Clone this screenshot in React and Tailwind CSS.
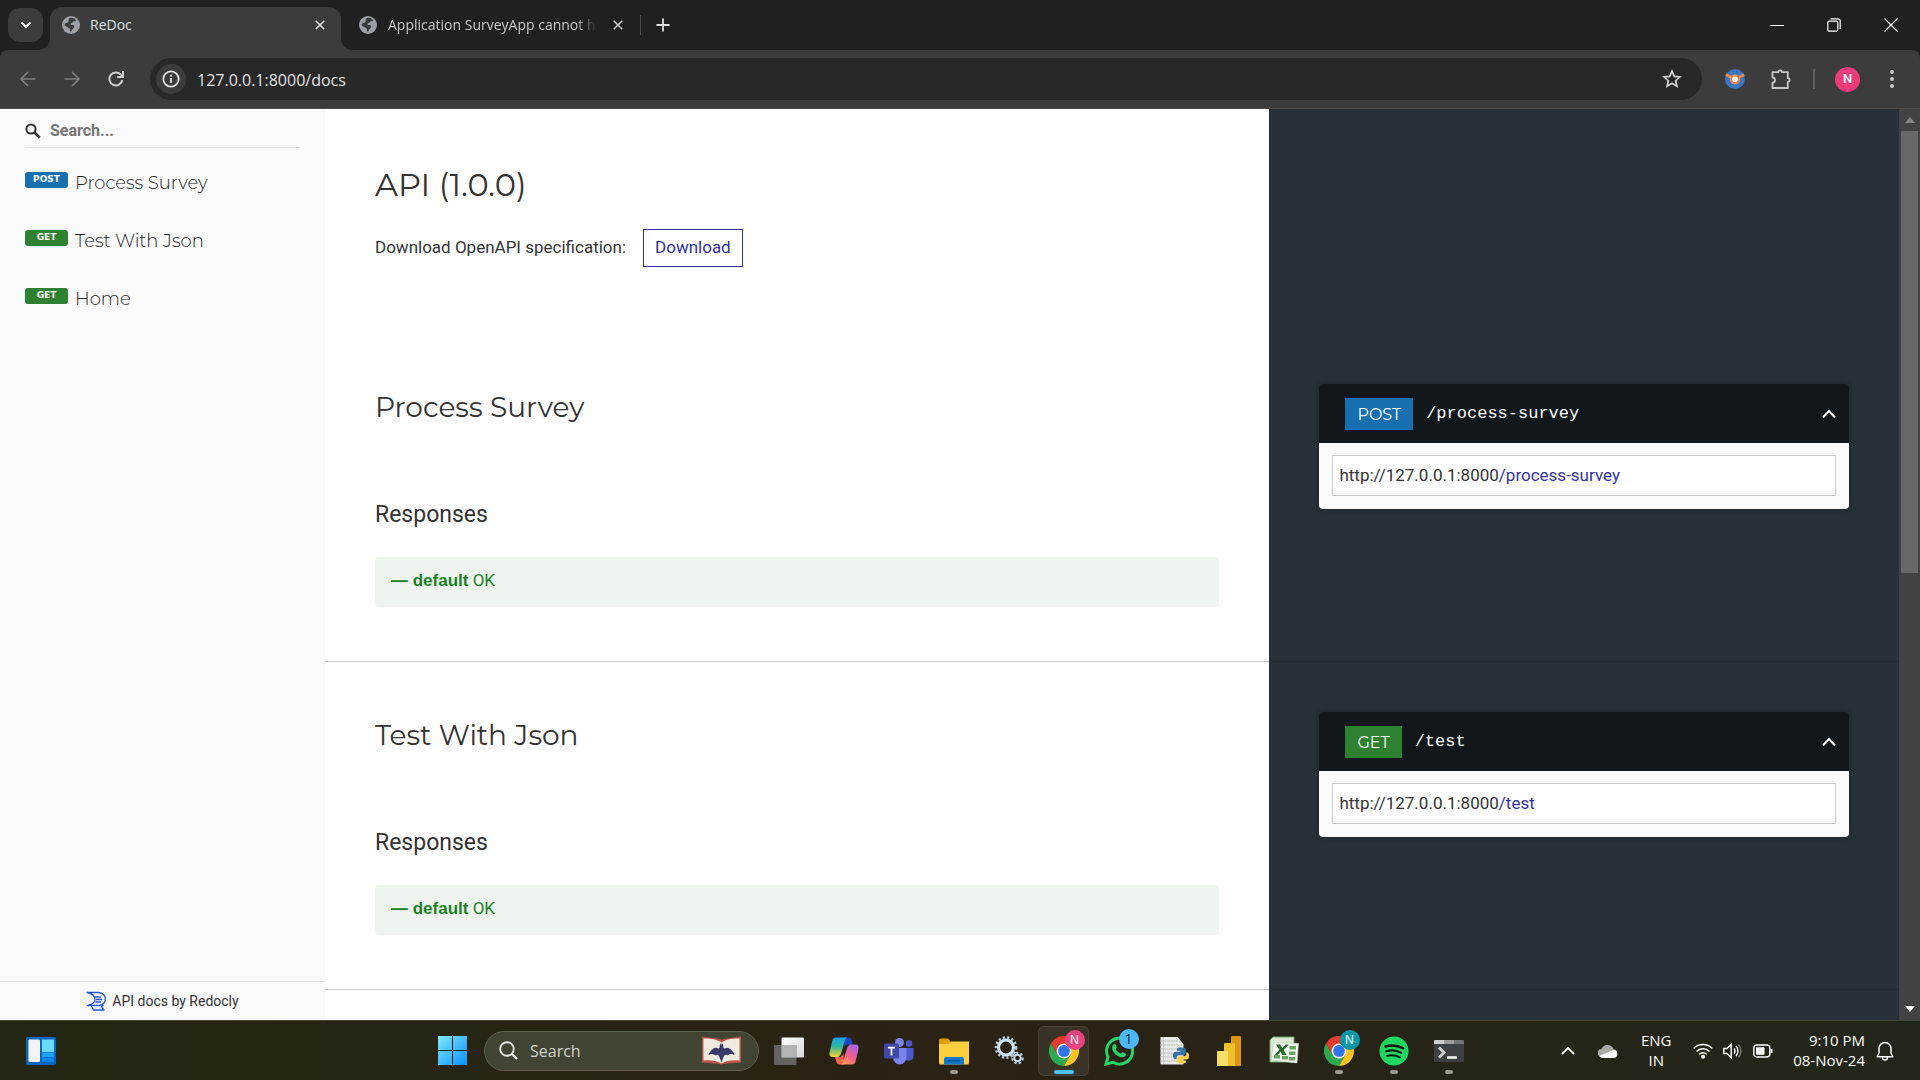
import React from "react";

const ui = "font-['Open_Sans','Noto_Sans',sans-serif]";
const heading = "font-['Montserrat','Inter',sans-serif]";

function Globe() {
  return (
    <svg viewBox="0 0 18 18" className="size-[18px] shrink-0">
      <circle cx="9" cy="9" r="9" fill="#9aa0a6" />
      <path d="M7.500 2.200c3-1.200 6 .4 6.800 3-1 .3-1.600-.5-2.500-.2-.8.3-.6 1.500-1.600 1.800C8.800 7.200 8 7.600 8.800 8.800c1 .6 2.700-.2 3.300 1 .6 1.300-.6 2.500-1.600 3.200-.5 1.200-.9 2.200-2 2.600-1-.7-.3-2.200-1-3.100C6.500 11.200 4 11 2.600 9c.2-1.500 1-2.300 2.200-2.300 1.400.2 2-.6 1.800-1.900-.2-1.100.1-2 .9-2.600z" fill="#3a3b3c" />
    </svg>
  );
}

function X({ className = "size-[10px]" }) {
  return (
    <svg viewBox="0 0 10 10" className={className} fill="none" stroke="currentColor" strokeWidth="1.6">
      <path d="M.7.7l8.600 8.600M9.300.7L.7 9.300" />
    </svg>
  );
}

function Tabs() {
  return (
    <div className="flex h-[50px] shrink-0 items-stretch text-[#dfe1e3]">
      <button aria-label="Search tabs" className="ml-2 mt-2 flex h-[34px] w-[35px] items-center justify-center rounded-xl bg-[#3c3c3c]">
        <svg viewBox="0 0 12 12" className="size-3" fill="none" stroke="#fff" strokeWidth="2"><path d="M1.500 3.500L6 8l4.500-4.500" /></svg>
      </button>
      <div className="relative ml-[7px] mt-[7px] flex w-[291px] items-center rounded-t-xl bg-[#3c3c3c] pb-[7px] pl-3 pr-4 text-sm">
        <svg viewBox="0 0 12 12" className="absolute -left-3 bottom-0 size-3" fill="#3c3c3c"><path d="M12 0v12H0C7 12 12 7 12 0z" /></svg>
        <svg viewBox="0 0 12 12" className="absolute -right-3 bottom-0 size-3" fill="#3c3c3c"><path d="M0 0v12h12C5 12 0 7 0 0z" /></svg>
        <Globe />
        <span className="ml-2.5 flex-1">ReDoc</span>
        <button aria-label="Close ReDoc"><X /></button>
      </div>
      <div className="mt-[7px] flex w-[291px] items-center pb-[7px] pl-[18px] pr-2 text-sm text-[#c6c8ca]">
        <Globe />
        <span className="ml-[11px] w-[209px] whitespace-nowrap [mask-image:linear-gradient(to_right,black_90%,transparent)]">Application SurveyApp cannot h</span>
        <button aria-label="Close Application SurveyApp" className="ml-4"><X /></button>
      </div>
      <div className="mt-[7px] flex items-center pb-[7px]">
        <span className="ml-2 h-5 w-px bg-[#4a4c4d]" />
        <button aria-label="New tab" className="ml-[15px]">
          <svg viewBox="0 0 14 14" className="size-[14px]" stroke="#dfe1e3" strokeWidth="1.800"><path d="M7 .5v13M.5 7h13" /></svg>
        </button>
      </div>
      <div className="ml-auto flex items-center gap-[43px] pr-[22px] text-white">
        <button aria-label="Minimize" className="flex size-[14px] items-center"><span className="h-px w-full bg-white" /></button>
        <button aria-label="Restore">
          <svg viewBox="0 0 14 14" className="size-[14px]" fill="none" stroke="#fff" strokeWidth="1.200"><rect x=".8" y="3.200" width="10" height="10" rx="1.500" /><path d="M3.500.8H11a2.200 2.200 0 012.200 2.200v8" /></svg>
        </button>
        <button aria-label="Close window">
          <svg viewBox="0 0 14 14" className="size-[14px]" stroke="#fff" strokeWidth="1.200"><path d="M.5.5l13 13M13.500.5l-13 13" /></svg>
        </button>
      </div>
    </div>
  );
}

function Toolbar() {
  return (
    <div className="flex h-[59px] shrink-0 items-center rounded-t-lg border-b border-[#4b4b4b] bg-[#3c3c3c] pl-5 text-[#c7c7c7]">
      <div className="flex w-[130px] items-center gap-7">
        <button aria-label="Back"><svg viewBox="0 0 16 16" className="size-4" fill="none" stroke="#7d7d7d" strokeWidth="1.700"><path d="M15.500 8H1.500M8 1L1 8l7 7" /></svg></button>
        <button aria-label="Forward"><svg viewBox="0 0 16 16" className="size-4" fill="none" stroke="#7d7d7d" strokeWidth="1.700"><path d="M.5 8h14M8 1l7 7-7 7" /></svg></button>
        <button aria-label="Reload"><svg viewBox="0 0 16 16" className="size-4" fill="none" stroke="#d0d0d0" strokeWidth="2"><path d="M14.300 9A6.500 6.500 0 1112.600 3.400L14.500 5.300" /><path d="M15 0v6H9.200" /></svg></button>
      </div>
      <div className="flex h-[42px] flex-1 items-center rounded-full bg-[#282828] pl-1.5 pr-5">
        <button aria-label="View site information" className="flex size-[30px] items-center justify-center rounded-full bg-[#3c3c3c]">
          <svg viewBox="0 0 18 18" className="size-[18px]" fill="none" stroke="#e3e3e3" strokeWidth="1.800"><circle cx="9" cy="9" r="7.700" /><path d="M9 8v5M9 4.800v1.800" /></svg>
        </button>
        <input aria-label="Address" defaultValue="127.0.0.1:8000/docs" className="ml-[11px] flex-1 bg-transparent pt-0.5 text-base text-[#e3e3e3] outline-none" />
        <button aria-label="Bookmark this tab">
          <svg viewBox="0 0 20 20" className="size-5" fill="none" stroke="#d0d0d0" strokeWidth="1.700"><path d="M10 2.200l2.300 5.200 5.700.5-4.300 3.800 1.300 5.600-5-3-5 3 1.300-5.600L2 7.900l5.700-.5z" /></svg>
        </button>
      </div>
      <div className="ml-[23px] flex items-center">
        <button aria-label="Survey extension">
          <svg viewBox="0 0 20 20" className="size-5"><circle cx="10" cy="10" r="10" fill="#3a76c4" /><path d="M1 5.500L7 9M19 5.500L13 9" stroke="#f08a4b" strokeWidth="3" /><circle cx="10" cy="10.500" r="5" fill="#f08a4b" /><circle cx="10" cy="10.300" r="2.800" fill="#fff" /></svg>
        </button>
        <button aria-label="Extensions" className="ml-[26px]">
          <svg viewBox="0 0 20 20" className="size-5" fill="none" stroke="#c7c7c7" strokeWidth="1.800" strokeLinejoin="round"><path d="M1.500 3.200H7.300a1.800 1.800 0 013.600 0H16.800V9.200a1.800 1.800 0 010 3.600V19H1.500V13.600a2.500 2.500 0 000-5z" /></svg>
        </button>
        <span className="ml-[22px] h-5 w-0.5 bg-[#5c5c5c]" />
        <button aria-label="Profile N" className="ml-5 flex size-[25px] items-center justify-center rounded-full bg-[#ec3d7a] font-['Roboto',sans-serif] text-[13px] font-medium text-white">N</button>
        <button aria-label="Menu" className="ml-[30px] mr-[26px] flex flex-col gap-[3px]">
          <span className="size-1 rounded-full bg-[#c7c7c7]" /><span className="size-1 rounded-full bg-[#c7c7c7]" /><span className="size-1 rounded-full bg-[#c7c7c7]" />
        </button>
      </div>
    </div>
  );
}

function NavItem({ method, color, children }) {
  return (
    <li>
      <a href="#op" className="flex h-[58px] items-start">
        <span className={`${color} flex h-4 w-[43px] items-center justify-center rounded-[3px] font-['DejaVu_Sans',sans-serif] text-[9px] font-bold text-white`}>{method}</span>
        <span className={`${heading} ml-[7px] text-lg font-light leading-[22px] text-[#222]`}>{children}</span>
      </a>
    </li>
  );
}

function Sidebar() {
  return (
    <aside className="flex w-[325px] shrink-0 flex-col bg-[#fafafa]">
      <label className="mx-[25px] mt-1.5 flex h-[33px] items-center border-b border-[#e1e1e1]">
        <svg viewBox="0 0 16 16" className="size-4" fill="none" stroke="#333"><circle cx="6" cy="6" r="4.600" strokeWidth="2" /><path d="M9.500 9.500l5.200 5.200" strokeWidth="2.600" /></svg>
        <input aria-label="Search" placeholder="Search..." className="ml-[9px] min-w-0 flex-1 bg-transparent text-base font-bold outline-none placeholder:text-[#757575]" />
      </label>
      <ul className="ml-[25px] mt-6 flex-1">
        <NavItem method="POST" color="bg-[#186faf]">Process Survey</NavItem>
        <NavItem method="GET" color="bg-[#2f8132]">Test With Json</NavItem>
        <NavItem method="GET" color="bg-[#2f8132]">Home</NavItem>
      </ul>
      <a href="#redocly" className="flex h-[39px] items-center justify-center gap-1.5 border-t border-[#e1e1e1] text-sm text-[#333]">
        <svg viewBox="0 0 20 20" className="size-5" fill="none" stroke="#2457e0" strokeWidth="1.300" strokeLinejoin="round"><path d="M1 1.500h11.500c9 1 9 11.500.5 13H1.500c6-1.500 7.500-3 7.500-6S6 2.500 1 1.500zM2 14.500l4-1M5 14.500l2.500 4.500h10.500l-2.500-3.300 2-2M9 6h6M10 8.500h6M9.500 11h5.500" /></svg>
        API docs by Redocly
      </a>
    </aside>
  );
}

function Operation({ title, method, color, path }) {
  return (
    <section className="flex">
      <div className="w-3/5 border-b border-[#c8c8c8] px-[50px] pb-[54px] pt-[50px]">
        <h2 className={`${heading} text-[28px] leading-[46px] text-[#333]`}>{title}</h2>
        <h3 className="mt-[69px] text-[23px] leading-8">Responses</h3>
        <button className="mt-[26px] block h-[50px] w-full rounded-sm bg-[#eef5ee] px-4 pb-0.5 text-left text-[17px] text-[#1d8127]">
          <strong className="font-['Liberation_Sans',sans-serif]">— default</strong> OK
        </button>
      </div>
      <div className="w-2/5 border-b border-[#212c31] bg-[#263238] px-[50px] pt-[50px]">
        <div className="rounded shadow-[0_0_6px_rgba(0,0,0,0.33)]">
          <button className="flex h-[59px] w-full items-center rounded-t bg-[#11171a] pl-[26px] pr-[13px] text-white">
            <span className={`${color} ${heading} flex h-8 items-center px-3 pt-0.5 text-base`}>{method}</span>
            <span className="ml-[13px] font-['Liberation_Mono',monospace] text-[17px]">{path}</span>
            <svg viewBox="0 0 14 10" className="ml-auto h-2.5 w-3.5" fill="none" stroke="#fff" strokeWidth="2"><path d="M1 8.500l6-6.500 6 6.500" /></svg>
          </button>
          <div className="rounded-b bg-[#fafafa] px-[13px] pb-[13px] pt-3">
            <div className="flex h-[41px] items-center border border-[#ccc] bg-white px-1.5 text-[17px]">http://127.0.0.1:8000<span className="text-[#32329f]">{path}</span></div>
          </div>
        </div>
      </div>
    </section>
  );
}

function ChromeIcon({ letter, badge }) {
  return (
    <span className="relative">
      <svg viewBox="0 0 30 30" className="size-[30px]">
        <path d="M2 7.500L8.500 18.750 15 22.500 21.500 18.750 15 30A15 15 0 012 7.500z" fill="#2da94f" />
        <path d="M28 7.500A15 15 0 0115 30L21.500 18.750 15 7.500z" fill="#fcc31e" />
        <path d="M2 7.500A15 15 0 0128 7.500H15L8.500 18.750z" fill="#e33b2e" />
        <circle cx="15" cy="15" r="7.400" fill="#fff" /><circle cx="15" cy="15" r="5.900" fill="#2f74ea" />
      </svg>
      <span className={`${badge} absolute -right-1.5 -top-1.5 flex size-5 items-center justify-center rounded-full text-xs font-semibold text-white/80`}>{letter}</span>
    </span>
  );
}

function Gear({ cx, cy, r, w }) {
  return (
    <g fill="none" stroke="#cfe4f3">
      <circle cx={cx} cy={cy} r={r} strokeWidth={w} />
      <circle cx={cx} cy={cy} r={r + w / 2 + 1} strokeWidth="2.500" strokeDasharray="2.200 2.200" stroke="#b4cfe4" />
    </g>
  );
}

const apps = [
  ["Task View", <svg viewBox="0 0 30 30" className="size-[30px]"><defs><linearGradient id="tv" x2="1" y2="1"><stop stopColor="#fff" /><stop offset="1" stopColor="#d8d8d8" /></linearGradient></defs><rect x="7.500" y="1.500" width="22.500" height="20" rx="1" fill="url(#tv)" /><rect x="0" y="9" width="22.500" height="20" rx="1" fill="#6f6f6f" fillOpacity=".85" /><rect x="7.500" y="9" width="15" height="12.500" fill="#b4b4b4" /></svg>],
  ["Copilot", <svg viewBox="0 0 30 30" className="size-[30px]"><defs><linearGradient id="cpa" x2="0" y2="1"><stop stopColor="#18a0f0" /><stop offset=".45" stopColor="#2fb5a0" /><stop offset="1" stopColor="#f4d12c" /></linearGradient><linearGradient id="cpb" x1=".8" x2=".2" y2="1"><stop stopColor="#a665f0" /><stop offset=".5" stopColor="#ee5a94" /><stop offset="1" stopColor="#fb9a4b" /></linearGradient></defs><path d="M15 1.500h4.500c2 0 2.700 1.200 3.300 3.500l1 3.500h-5c-2 0-3 1-3.500 3z" fill="#1b48c8" /><path d="M6.500 1.500H19c-2 0-2.800 2-3.500 4.500l-3.300 11c-.8 2.700-2 4-4.500 4H3.500C0 21 0 18 1 14.500L3 6c.7-3 1.500-4.500 3.500-4.500z" fill="url(#cpa)" /><path d="M15 28.500h-4.500c-2 0-2.800-1.200-3.400-3.500L6 21h4c2.500 0 3.700-1.200 4.500-4z" fill="#f4654b" /><path d="M23.500 28.500H11c2 0 2.800-2 3.500-4.500l3.300-11c.8-2.700 2-4.500 4.500-4.500h4.200c3.500 0 3.500 3 2.500 6.500l-2 8.500c-.7 3-1.500 5-3.500 5z" fill="url(#cpb)" /></svg>],
  ["Teams", <svg viewBox="0 0 30 30" className="size-[30px]"><circle cx="15.500" cy="6.500" r="4.500" fill="#7b83eb" /><circle cx="25" cy="7.500" r="3.200" fill="#5059c9" /><path d="M20 12h9.500v8a5 5 0 01-9.500 2z" fill="#5059c9" /><path d="M9 12h13.500v9a6.750 7.500 0 01-13.500 0z" fill="#7b83eb" /><rect x="0" y="7.500" width="15" height="15" rx="1.500" fill="#4048a8" /><path d="M4 11.700h7M7.500 12v7.500" stroke="#fff" strokeWidth="1.800" /></svg>],
  ["File Explorer", <svg viewBox="0 0 30 30" className="size-[30px]"><path d="M0 4.500a2 2 0 012-2h7l3 3.500h8v5H0z" fill="#dfa006" /><path d="M0 8h9.500l3-2.500H30V27a1.500 1.500 0 01-1.500 1.500h-27A1.500 1.500 0 010 27z" fill="#fdcf3f" /><path d="M5 28.500V23a2 2 0 012-2h16a2 2 0 012 2v5.500z" fill="#1177c9" /><path d="M8.500 24.800h13" stroke="#07508f" strokeWidth="1.300" /></svg>, "dot"],
  ["Settings", <svg viewBox="0 0 30 30" className="size-[30px]"><Gear cx={12} cy={11.5} r={7.5} w={3.2} /><Gear cx={23.5} cy={22} r={3.2} w={1.8} /></svg>],
  ["Chrome", <ChromeIcon letter="N" badge="bg-[#e8437f]" />, "active"],
  ["WhatsApp", <span className="relative"><svg viewBox="0 0 30 30" className="size-[30px]" fill="none"><path d="M2 28l2-7A13 13 0 119 26.300z" stroke="#25d366" strokeWidth="3" /><path d="M9.500 8.500c1-1 2-.7 2.500.4l.8 2c.3.9-1.300 1.700-1 2.400 1 2 2.600 3.500 4.700 4.300.8.300 1.500-1.600 2.500-1.200l2.300 1.100c.9.500.8 1.200.2 2.200-1.200 1.800-3.500 2-5.700 1.200-3.300-1.200-5.800-3.500-7.200-6.700-.8-2-.8-4.200.9-5.700z" fill="#25d366" /></svg><span className="absolute -right-[5px] -top-[7px] flex size-5 items-center justify-center rounded-full bg-[#4cb8f5] text-sm text-[#12222c]">1</span></span>],
  ["Python IDLE", <svg viewBox="0 0 30 30" className="size-[30px]"><path d="M1.500 1h17l6 7v20.500h-23z" fill="#e9e9e7" /><path d="M4.500 1v27M1.500 5h18M1.500 9h22M1.500 13h22M1.500 17h20M1.500 21h15M1.500 25h18" stroke="#b9b9b6" strokeWidth="1" strokeDasharray="2 .6" /><path d="M21 11.500h3c2 0 2.800 1 2.800 2.700v2.600c0 1.700-1 2.400-2.600 2.400h-4c-1.700 0-2.500 1-2.500 2.600v1.500h-1.200c-1.700 0-2.500-1.500-2.500-3.800s.8-3.800 2.800-3.800h4.700v-1h-3.500v-1.500c0-1.200 1.200-1.700 3-1.700z" fill="#3974a8" /><path d="M24 27.500h-3c-2 0-2.800-1-2.800-2.700v-2.100c0-1.700 1-2.500 2.600-2.500h4c1.700 0 2.500-1 2.500-2.600v-1.100h.7c1.400 0 2 1.500 2 3.500s-.7 3.600-2.500 3.600h-4v1h3.500v1.200c0 1.200-1.200 1.700-3 1.700z" fill="#fbd047" /></svg>],
  ["Power BI", <svg viewBox="0 0 30 30" className="size-[30px]"><rect x="17" width="10" height="30" rx=".8" fill="#dc9511" /><path d="M10 8a1 1 0 011-1h9a1 1 0 011 1v22H10z" fill="#f0c02d" /><path d="M3 16a1 1 0 011-1h9a1 1 0 011 1v14H3z" fill="#f8de6a" /></svg>],
  ["Excel", <svg viewBox="0 0 30 30" className="size-[30px]"><path d="M4 1h21v25H1V4z" fill="#d9ecd2" stroke="#6aa36a" /><path d="M5 6.500l24.500 1-1.500 19.500L2 24z" fill="#f7faf4" stroke="#b8cdb4" strokeWidth=".6" /><path d="M20.500 10h6.500v3.500h-6.500zM20 15.500h6.500V19H20zM13 20h6v3.500h-6zM20 21h6v3.500h-6zM5 19h6v3.500H5z" fill="#69a65b" /><path d="M7 8.500h4.200l2 3.500 3.500-3.500h3l-5 5.500 3 5h-4.200l-1.800-3-3 3H5.500l5-5.300z" fill="#256b2c" /></svg>],
  ["Chrome profile N", <ChromeIcon letter="N" badge="bg-[#0797a7]" />, "dot"],
  ["Spotify", <svg viewBox="0 0 30 30" className="size-[30px]" fill="none" stroke="#10180f" strokeLinecap="round"><circle cx="15" cy="15" r="14.500" fill="#1ed760" stroke="none" /><path d="M6.500 10.500c6-1.700 12-1.200 17.500 1.700" strokeWidth="2.600" /><path d="M7.300 15.300c5-1.400 10.500-.9 15 1.600" strokeWidth="2.200" /><path d="M8 19.800c4.500-1.100 9-.6 12.800 1.500" strokeWidth="1.900" /></svg>, "dot"],
  ["Terminal", <svg viewBox="0 0 30 30" className="size-[30px]"><rect y="4" width="30" height="22" rx="1" fill="#3e4043" /><path d="M0 5a1 1 0 011-1h9v4H0z" fill="#cfcfd1" /><path d="M10 4h10v4H10z" fill="#9b9b9d" /><path d="M20 4h9a1 1 0 011 1v3H20z" fill="#747577" /><path d="M5 11.500l5 5-5 5" fill="none" stroke="#cfcfcf" strokeWidth="2.800" /><path d="M13 21.500h10" stroke="#f2f2f2" strokeWidth="2.600" /></svg>, "dot"],
];

function Taskbar() {
  return (
    <footer className="grid h-[60px] shrink-0 grid-cols-[1fr_auto_1fr] items-center border-t border-[#44473a] bg-linear-to-r from-[#232614] via-[#2a2214] to-[#22261a] text-white">
      <button aria-label="Widgets" className="ml-[26px] justify-self-start">
        <svg viewBox="0 0 30 28" className="h-7 w-[30px]"><rect width="30" height="28" rx="1.500" fill="#0a66b8" /><rect x="2.500" y="2.500" width="11.500" height="22.500" rx="1" fill="#f4f4f6" /><path d="M16 2.500h12V15H16z" fill="#68d8ff" /><path d="M16 15.500h12v4.500H16z" fill="#1ea2fb" /><path d="M16 20.500h12V25H16z" fill="#0583ee" /></svg>
      </button>
      <div className="flex items-center pr-1.5">
        <button aria-label="Start" className="mr-[17px]">
          <svg viewBox="0 0 29 29" className="size-[29px]"><defs><linearGradient id="win" gradientUnits="userSpaceOnUse" x1="0" y1="0" x2="29" y2="29"><stop stopColor="#7deaff" /><stop offset="1" stopColor="#0a90fb" /></linearGradient></defs><path d="M0 0h14v14H0zM15 0h14v14H15zM0 15h14v14H0zM15 15h14v14H15z" fill="url(#win)" /></svg>
        </button>
        <label className="mr-0.5 flex h-10 w-[275px] items-center rounded-full border border-[#5d604e] bg-[#414433] pl-3.5 pr-[17px]">
          <svg viewBox="0 0 19 19" className="size-[19px]" fill="none" stroke="#e3e4df"><circle cx="8" cy="8" r="6.800" strokeWidth="1.900" /><path d="M13 13l5 5" strokeWidth="2.400" /></svg>
          <input aria-label="Windows search" placeholder="Search" className="ml-3 min-w-0 flex-1 bg-transparent text-base outline-none placeholder:text-[#d0d1cb]" />
          <svg viewBox="0 0 39 29" className="h-[29px] w-[39px]"><path d="M0 .5L18 3l2 1 1-1L39 .5v26L21 28l-1.500 1L18 28 0 26.500z" fill="#b8544a" /><path d="M1.500 2.500C8 2 15 3 19.500 6.500 24 3 31 2 37.500 2.500v22c-7-.5-13 0-18 3-5-3-11-3.500-18-3z" fill="#f0ebdf" /><path d="M19.500 7v20" stroke="#c5bfae" strokeWidth="2" /><path d="M18 7.500l1 1h1l1-1 .5 4.500c2 1.500 3-1 5 0 3 1.500 5 4 6 7-2.500-1.500-5-1.500-6.500.5-1.500-1-3-1-4 .5L19.500 26 17 20c-1-1.500-2.500-1.500-4-.5-1.500-2-4-2-6.500-.5 1-3 3-5.500 6-7 2-1 3 1.500 5 0z" fill="#38386a" /></svg>
        </label>
        {apps.map(([name, icon, state]) => (
          <button key={name} aria-label={name} className={`relative mx-[2px] flex h-[50px] w-[51px] items-center justify-center rounded-md ${state === "active" ? "bg-white/8 ring-1 ring-inset ring-white/8" : ""}`}>
            {icon}
            {state === "dot" && <span className="absolute bottom-0.5 h-1 w-2 rounded-full bg-[#9b988f]" />}
            {state === "active" && <span className="absolute bottom-0.5 h-1 w-5 rounded-full bg-[#4cc2ff]" />}
          </button>
        ))}
      </div>
      <div className="flex items-center justify-self-end text-[15px] leading-5">
        <button aria-label="Show hidden icons"><svg viewBox="0 0 14 10" className="h-2.5 w-3.5" fill="none" stroke="#fff" strokeWidth="1.800"><path d="M1 8l6-6 6 6" /></svg></button>
        <svg viewBox="0 0 20 14" className="ml-[23px] h-3.5 w-5"><path d="M4 13a4 4 0 01-.5-8A6.500 6.500 0 0115.500 5a4.300 4.300 0 010 8.500z" fill="#a9a9a5" /><path d="M1.500 12L15 6a4 4 0 01.500 8H4c-1 0-2-.7-2.500-2z" fill="#fff" /></svg>
        <div className="ml-[22px] w-8 pb-0.5 text-center">ENG<br />IN</div>
        <svg viewBox="0 0 20 16" className="ml-[21px] h-4 w-5" fill="none" stroke="#fff" strokeWidth="1.500"><path d="M.7 5.500a13 13 0 0118.600 0M3.500 8.500a9 9 0 0113 0M6.300 11.300a5.200 5.200 0 017.400 0" /><circle cx="10" cy="13.800" r="1.300" fill="#fff" /></svg>
        <svg viewBox="0 0 20 16" className="ml-2.5 h-4 w-5" fill="none" stroke="#fff" strokeWidth="1.400"><path d="M.8 5.500h3L8.200 1.500v13L3.800 10.500h-3zM11 5.500a4 4 0 010 5M13 3a7.500 7.500 0 010 10" /><path d="M15.500 1.500a10 10 0 010 13" stroke="#777a70" /></svg>
        <svg viewBox="0 0 20 14" className="ml-2.5 h-3.5 w-5" fill="none" stroke="#fff" strokeWidth="1.400"><rect x=".8" y="1" width="16" height="12" rx="3" /><rect x="3" y="3.300" width="8.500" height="7.500" rx="1" fill="#fff" stroke="none" /><path d="M18.500 5v4" strokeWidth="2" /></svg>
        <div className="ml-5 pb-0.5 text-right">9:10 PM<br />08-Nov-24</div>
        <button aria-label="Notifications" className="ml-[11px] mr-[26px]"><svg viewBox="0 0 18 20" className="h-5 w-[18px]" fill="none" stroke="#fff" strokeWidth="1.500" strokeLinejoin="round"><path d="M3 12V7.500a6 6 0 0112 0V12l1.800 3.800H1.200zM6.500 16.500a2.500 2.500 0 005 0" /></svg></button>
      </div>
    </footer>
  );
}

export default function App() {
  return (
    <div className={`flex h-screen flex-col overflow-hidden bg-[#1f2121] ${ui}`}>
      <Tabs />
      <Toolbar />
      <div className="flex min-h-0 flex-1 overflow-hidden bg-white font-['Roboto',sans-serif] text-[#333]">
        <Sidebar />
        <main className="flex min-w-0 flex-1 flex-col overflow-hidden">
          <section className="flex shrink-0">
            <div className="h-[225px] w-3/5 px-[50px] pt-[52px]">
              <h1 className={`${heading} text-[32px] leading-[48px]`}>API (1.0.0)</h1>
              <p className="mt-5 flex items-center text-[17px]">Download OpenAPI specification:
                <a href="#download" className="ml-[17px] flex h-[38px] items-center border border-[#32329f] px-[11px] text-[#32329f]">Download</a>
              </p>
            </div>
            <div className="w-2/5 bg-[#263238]" />
          </section>
          <Operation title="Process Survey" method="POST" color="bg-[#186faf]" path="/process-survey" />
          <Operation title="Test With Json" method="GET" color="bg-[#2f8132]" path="/test" />
          <div className="flex flex-1">
            <div className="w-3/5" />
            <div className="w-2/5 bg-[#263238]" />
          </div>
        </main>
        <div className="flex w-[21px] shrink-0 flex-col items-center bg-[#424242]">
          <svg viewBox="0 0 10 6" className="my-2 h-[6px] w-2.5"><path d="M5 0l5 6H0z" fill="#868686" /></svg>
          <div className="h-[442px] w-[17px] bg-[#686868]" />
          <svg viewBox="0 0 10 6" className="mb-2 mt-auto h-[6px] w-2.5"><path d="M5 6l5-6H0z" fill="#fff" /></svg>
        </div>
      </div>
      <Taskbar />
    </div>
  );
}
